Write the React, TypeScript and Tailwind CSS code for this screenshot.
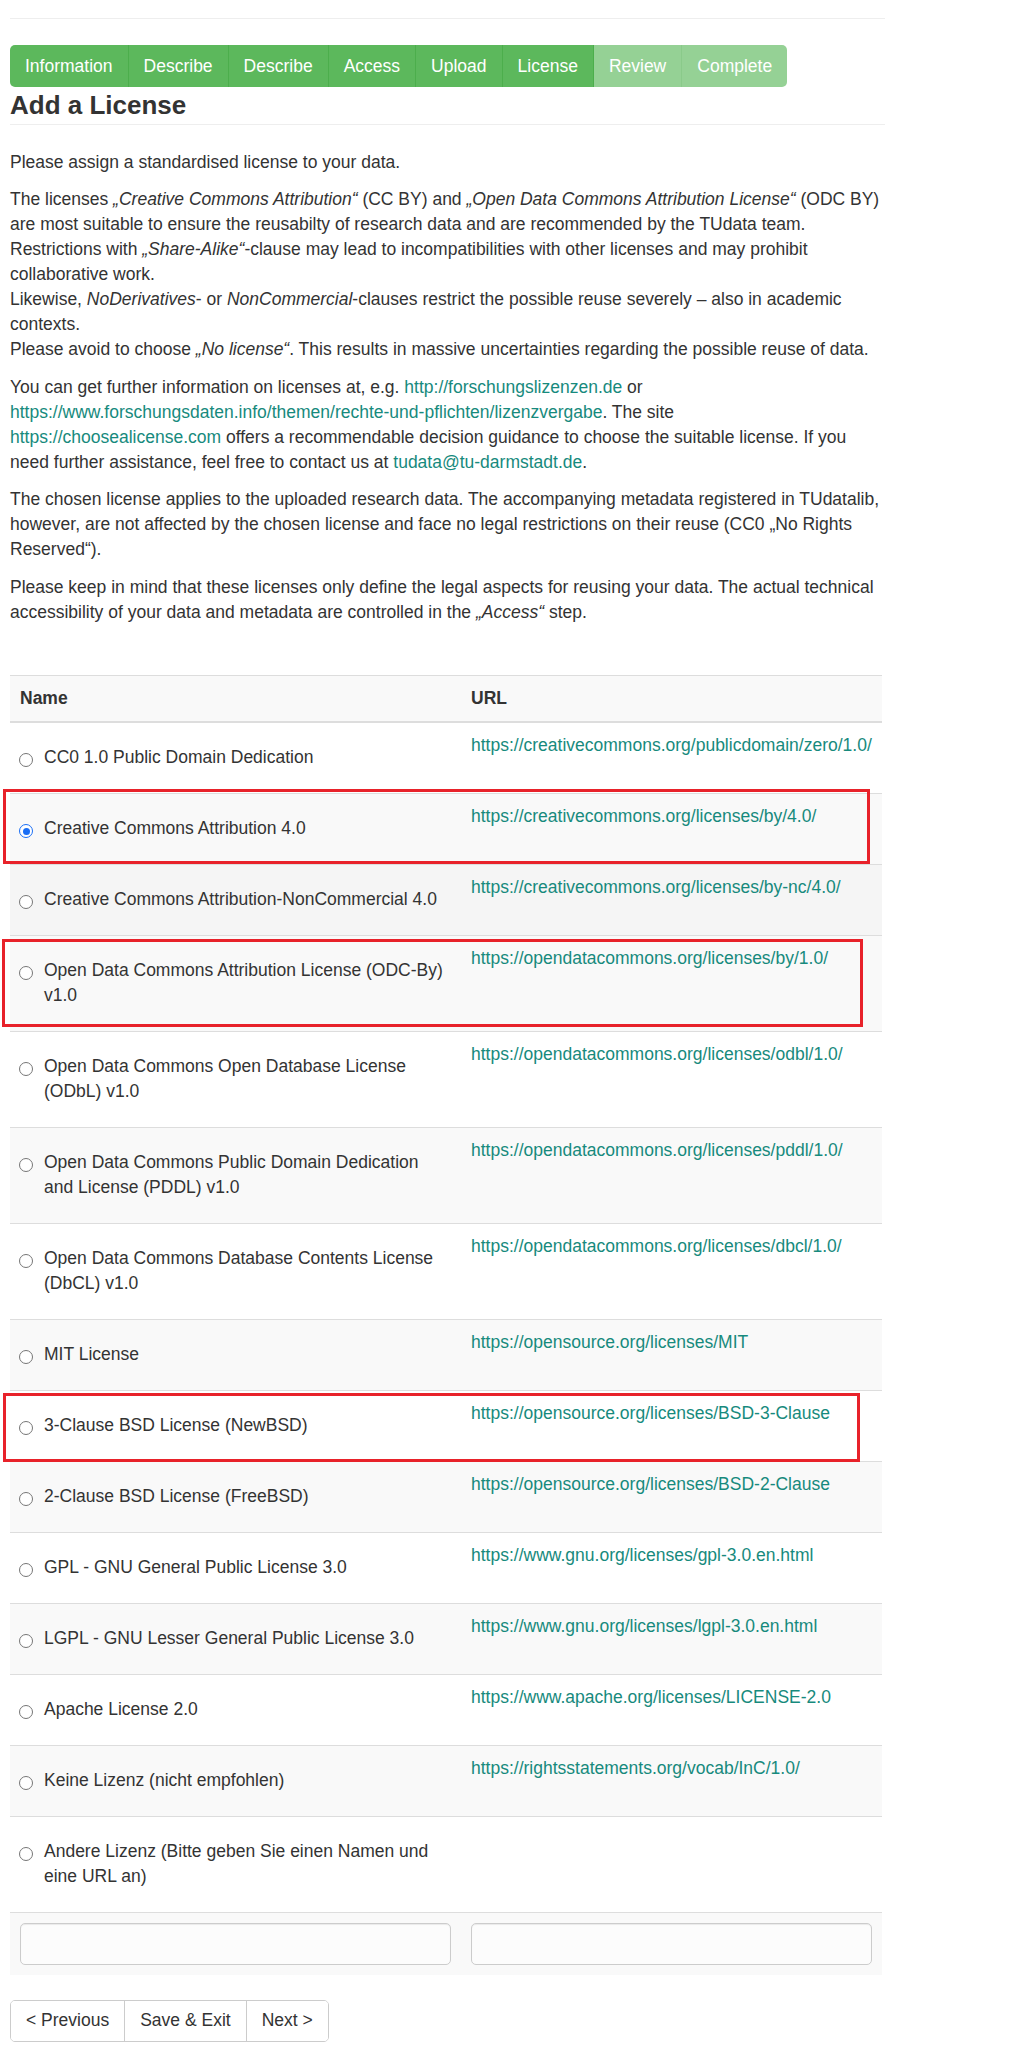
import React from "react";

type License = {
  name: string[];
  url?: string;
  checked?: boolean;
  hover?: boolean;
};

const steps: { label: string; done: boolean }[] = [
  { label: "Information", done: true },
  { label: "Describe", done: true },
  { label: "Describe", done: true },
  { label: "Access", done: true },
  { label: "Upload", done: true },
  { label: "License", done: true },
  { label: "Review", done: false },
  { label: "Complete", done: false },
];

const licenses: License[] = [
  { name: ["CC0 1.0 Public Domain Dedication"], url: "https://creativecommons.org/publicdomain/zero/1.0/" },
  { name: ["Creative Commons Attribution 4.0"], url: "https://creativecommons.org/licenses/by/4.0/", checked: true },
  { name: ["Creative Commons Attribution-NonCommercial 4.0"], url: "https://creativecommons.org/licenses/by-nc/4.0/", hover: true },
  { name: ["Open Data Commons Attribution License (ODC-By)", "v1.0"], url: "https://opendatacommons.org/licenses/by/1.0/" },
  { name: ["Open Data Commons Open Database License", "(ODbL) v1.0"], url: "https://opendatacommons.org/licenses/odbl/1.0/" },
  { name: ["Open Data Commons Public Domain Dedication", "and License (PDDL) v1.0"], url: "https://opendatacommons.org/licenses/pddl/1.0/" },
  { name: ["Open Data Commons Database Contents License", "(DbCL) v1.0"], url: "https://opendatacommons.org/licenses/dbcl/1.0/" },
  { name: ["MIT License"], url: "https://opensource.org/licenses/MIT" },
  { name: ["3-Clause BSD License (NewBSD)"], url: "https://opensource.org/licenses/BSD-3-Clause" },
  { name: ["2-Clause BSD License (FreeBSD)"], url: "https://opensource.org/licenses/BSD-2-Clause" },
  { name: ["GPL - GNU General Public License 3.0"], url: "https://www.gnu.org/licenses/gpl-3.0.en.html" },
  { name: ["LGPL - GNU Lesser General Public License 3.0"], url: "https://www.gnu.org/licenses/lgpl-3.0.en.html" },
  { name: ["Apache License 2.0"], url: "https://www.apache.org/licenses/LICENSE-2.0" },
  { name: ["Keine Lizenz (nicht empfohlen)"], url: "https://rightsstatements.org/vocab/InC/1.0/" },
  { name: ["Andere Lizenz (Bitte geben Sie einen Namen und", "eine URL an)"] },
];

function Radio({ checked }: { checked?: boolean }) {
  if (checked) {
    return (
      <span className="mt-[8px] ml-[-1px] flex h-[14px] w-[14px] shrink-0 items-center justify-center rounded-full border-[1.5px] border-[#1a6ef5] bg-white">
        <span className="h-[7px] w-[7px] rounded-full bg-[#1a6ef5]" />
      </span>
    );
  }
  return (
    <span className="mt-[8px] ml-[-1px] h-[14px] w-[14px] shrink-0 rounded-full border border-[#767676] bg-white" />
  );
}

function Link({ children }: { children: React.ReactNode }) {
  return <a className="text-[#178a7d]">{children}</a>;
}

export default function App() {
  return (
    <div className="min-h-[2063px] w-[1014px] bg-white font-['Liberation_Sans',Arial,sans-serif] text-[17.5px] leading-[25px] text-[#333]">
      <div className="w-[885px] pl-[10px]">
        <div className="mt-[18px] border-t border-[#eee]" />

        {/* progress steps */}
        <div className="mt-[26px] inline-flex overflow-hidden rounded-[5px]">
          {steps.map((s, i) => (
            <div
              key={i}
              className={`flex h-[42px] items-center px-[15px] text-white ${
                s.done ? "bg-[#5cb85c]" : "bg-[#95d195]"
              } ${
                i < steps.length - 1
                  ? s.done
                    ? "border-r border-[#4cae4c]"
                    : "border-r border-[#8aca8a]"
                  : ""
              }`}
            >
              {s.label}
            </div>
          ))}
        </div>

        <h3 className="mt-[4px] border-b border-[#eee] pb-[4px] text-[26px] leading-[29px] font-bold text-[#333]">
          Add a License
        </h3>

        <div className="w-[960px]">
          <p className="mt-[24.5px] mb-[12.5px]">Please assign a standardised license to your data.</p>
          <p className="mb-[12.5px]">
            The licenses <i>„Creative Commons Attribution“</i> (CC BY) and{" "}
            <i>„Open Data Commons Attribution License“</i> (ODC BY)
            <br />
            are most suitable to ensure the reusabilty of research data and are recommended by the TUdata team.
            <br />
            Restrictions with <i>„Share-Alike“</i>-clause may lead to incompatibilities with other licenses and may prohibit
            <br />
            collaborative work.
            <br />
            Likewise, <i>NoDerivatives</i>- or <i>NonCommercial</i>-clauses restrict the possible reuse severely – also in academic
            <br />
            contexts.
            <br />
            Please avoid to choose <i>„No license“</i>. This results in massive uncertainties regarding the possible reuse of data.
          </p>
          <p className="mb-[12.5px]">
            You can get further information on licenses at, e.g. <Link>http://forschungslizenzen.de</Link> or
            <br />
            <Link>https://www.forschungsdaten.info/themen/rechte-und-pflichten/lizenzvergabe</Link>. The site
            <br />
            <Link>https://choosealicense.com</Link> offers a recommendable decision guidance to choose the suitable license. If you
            <br />
            need further assistance, feel free to contact us at <Link>tudata@tu-darmstadt.de</Link>.
          </p>
          <p className="mb-[12.5px]">
            The chosen license applies to the uploaded research data. The accompanying metadata registered in TUdatalib,
            <br />
            however, are not affected by the chosen license and face no legal restrictions on their reuse (CC0 „No Rights
            <br />
            Reserved“).
          </p>
          <p className="mb-[12.5px]">
            Please keep in mind that these licenses only define the legal aspects for reusing your data. The actual technical
            <br />
            accessibility of your data and metadata are controlled in the <i>„Access“</i> step.
          </p>
        </div>

        {/* license table */}
        <div className="relative mt-[50px] mb-[25px] w-[872px]">
          <table className="w-[872px] table-fixed border-collapse text-left">
            <colgroup>
              <col className="w-[451px]" />
              <col />
            </colgroup>
            <thead>
              <tr className="bg-[#f9f9f9]">
                <th className="border-t border-b-2 border-[#ddd] px-[10px] py-[10px] font-bold">Name</th>
                <th className="border-t border-b-2 border-[#ddd] px-[10px] py-[10px] font-bold">URL</th>
              </tr>
            </thead>
            <tbody>
              {licenses.map((l, i) => {
                const bg = l.hover ? "bg-[#f5f5f5]" : i % 2 === 1 ? "bg-[#f9f9f9]" : "bg-white";
                return (
                  <tr key={i} className={bg}>
                    <td className="border-t border-[#ddd] p-[10px] align-top">
                      <label className="my-[12.5px] flex gap-[11px]">
                        <Radio checked={l.checked} />
                        <span className="whitespace-nowrap">
                          {l.name.map((line, j) => (
                            <span key={j} className="block">
                              {line}
                            </span>
                          ))}
                        </span>
                      </label>
                    </td>
                    <td className="border-t border-[#ddd] p-[10px] align-top whitespace-nowrap">
                      {l.url && <Link>{l.url}</Link>}
                    </td>
                  </tr>
                );
              })}
              <tr className="bg-[#f9f9f9]">
                <td className="border-t border-[#ddd] p-[10px]">
                  <input className="block h-[42px] w-full rounded-[5px] border border-[#ccc] bg-[#fcfcfc] shadow-[inset_0_1px_1px_rgba(0,0,0,0.075)]" />
                </td>
                <td className="border-t border-[#ddd] p-[10px]">
                  <input className="block h-[42px] w-full rounded-[5px] border border-[#ccc] bg-[#fcfcfc] shadow-[inset_0_1px_1px_rgba(0,0,0,0.075)]" />
                </td>
              </tr>
            </tbody>
          </table>

          {/* annotation boxes */}
          <div className="pointer-events-none absolute left-[-7px] top-[114px] h-[75px] w-[867px] border-[3px] border-[#e8222a]" />
          <div className="pointer-events-none absolute left-[-8px] top-[264px] h-[88px] w-[861px] border-[3px] border-[#e8222a]" />
          <div className="pointer-events-none absolute left-[-7px] top-[718px] h-[69px] w-[857px] border-[3px] border-[#e8222a]" />
        </div>

        {/* wizard buttons */}
        <div className="inline-flex overflow-hidden rounded-[5px] border border-[#ccc]">
          <button className="h-[40px] border-r border-[#ccc] bg-white px-[15px] text-[#333]">&lt; Previous</button>
          <button className="h-[40px] border-r border-[#ccc] bg-white px-[15px] text-[#333]">Save &amp; Exit</button>
          <button className="h-[40px] bg-white px-[15px] text-[#333]">Next &gt;</button>
        </div>
      </div>
    </div>
  );
}
